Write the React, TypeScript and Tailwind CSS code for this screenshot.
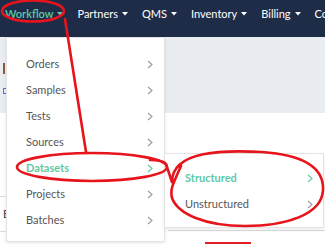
import React from "react";

const Chevron = ({ color = "#9a9a9a" }: { color?: string }) => (
  <svg width="6" height="9" viewBox="0 0 6 9" fill="none">
    <path d="M1 1 L5 4.5 L1 8" stroke={color} strokeWidth="1.1" />
  </svg>
);

const Caret = () => (
  <svg width="6" height="4" viewBox="0 0 6 4" className="ml-[4px] mt-[1px]">
    <path d="M0 0 L6 0 L3 3.5 Z" fill="currentColor" />
  </svg>
);

const navItems = [
  { label: "Workflow", active: true },
  { label: "Partners" },
  { label: "QMS" },
  { label: "Inventory" },
  { label: "Billing" },
  { label: "Co", noCaret: true },
];

const menu = ["Orders", "Samples", "Tests", "Sources", "Datasets", "Projects", "Batches"];

export default function App() {
  return (
    <div
      className="relative w-[325px] h-[244px] overflow-hidden bg-white"
      style={{ fontFamily: "Lato, 'Open Sans', sans-serif" }}
    >
      {/* Navbar */}
      <nav className="h-[37px] bg-[#1f2c48] flex items-start pt-[6px] pl-[5px] gap-[14px] text-[11px] leading-[15px] text-white whitespace-nowrap">
        {navItems.map((n) => (
          <div
            key={n.label}
            className={`flex items-center ${n.active ? "text-[#5ec9a6] font-semibold" : ""}`}
          >
            {n.label}
            {!n.noCaret && <Caret />}
          </div>
        ))}
      </nav>

      {/* Page content behind */}
      <div className="h-[76px] bg-[#e9edf1] flex flex-col gap-[14px] pl-[3px] pt-[26px]">
        <div className="w-[2px] h-[11px] bg-[#8b5a3c]" />
        <div className="w-[4px] h-[6px] border border-[#3b7dd8]" />
      </div>
      <div className="flex">
        <div className="w-[8px] flex flex-col pt-[83px]">
          <div className="h-[36px] border-y border-[#dcdcdc] flex items-center pl-[3px] text-[11px] text-[#444]">
            E
          </div>
        </div>
        <div className="flex-1 flex flex-col pl-[160px] pt-[117px]">
          <div className="h-px bg-[#dcdcdc]" />
          <div className="ml-[37px] mt-[11px] w-[46px] h-[3px] bg-[#e31e24]" />
        </div>
      </div>

      {/* Dropdown menu */}
      <div className="absolute left-[6px] top-[37px] w-[159px] h-[205px] bg-white border border-[#e3e3e3] shadow-[0_2px_4px_rgba(0,0,0,0.08)] pt-[13px] text-[11px] text-[#555]">
        {menu.map((m) => {
          const active = m === "Datasets";
          return (
            <div
              key={m}
              className={`h-[26px] flex items-center justify-between pl-[19px] pr-[11px] ${
                active ? "text-[#5ec9a6] font-bold" : ""
              }`}
            >
              <span>{m}</span>
              <Chevron color={active ? "#5ec9a6" : "#9a9a9a"} />
            </div>
          );
        })}
      </div>

      {/* Submenu */}
      <div className="absolute left-[164px] top-[153px] w-[160px] h-[75px] bg-white border border-[#e3e3e3] shadow-[0_2px_4px_rgba(0,0,0,0.08)] pt-[11px] text-[11px] text-[#555]">
        <div className="h-[26px] flex items-center justify-between pl-[20px] pr-[10px] text-[#5ec9a6] font-bold">
          <span>Structured</span>
          <Chevron color="#5ec9a6" />
        </div>
        <div className="h-[26px] flex items-center justify-between pl-[20px] pr-[10px]">
          <span>Unstructured</span>
          <Chevron />
        </div>
      </div>

      {/* Red annotations */}
      <svg
        className="absolute inset-0 pointer-events-none"
        width="325"
        height="244"
        viewBox="0 0 325 244"
        fill="none"
        stroke="#e8141c"
        strokeWidth="2.6"
        strokeLinecap="round"
      >
        <ellipse cx="33" cy="11" rx="31" ry="10.5" />
        <path d="M65 19 L86 152" />
        <ellipse cx="92" cy="167" rx="75" ry="14" />
        <path d="M150 160 C 158 160, 164 161, 166 164 C 168 170, 170 176, 172 182" />
        <path d="M172 182 C 172 150, 225 150, 262 152 C 305 155, 324 168, 323 190 C 322 215, 285 226, 245 226 C 205 226, 178 214, 172 198 C 170 190, 172 186, 181 166" />
      </svg>
    </div>
  );
}
